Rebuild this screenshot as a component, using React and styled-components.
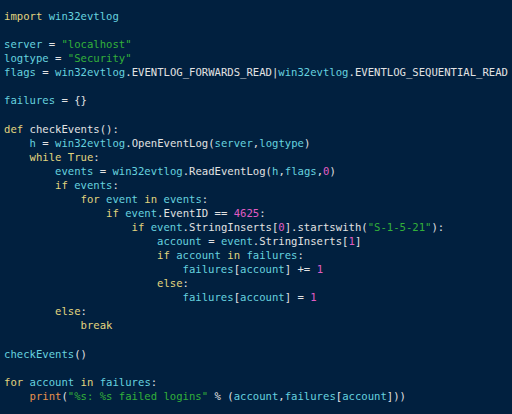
import React from 'react';
import styled, { createGlobalStyle } from 'styled-components';

const Global = createGlobalStyle`
  html, body {
    margin: 0;
    padding: 0;
    background: #01203f;
  }
`;

const palette = {
  id: '#66d2df',
  kw: '#e3d57e',
  str: '#33b03a',
  num: '#e05cc4',
  op: '#e2e2e2',
  fn: '#e8914c',
};

const Editor = styled.div`
  width: 512px;
  height: 414px;
  box-sizing: border-box;
  padding: 9px 0 0 4px;
  background: #01203f;
  font-family: "DejaVu Sans Mono", "Liberation Mono", monospace;
  font-size: 10.6px;
  line-height: 14.07px;
  overflow: hidden;
`;

const Line = styled.div`
  white-space: pre;
  height: 14.07px;
  color: ${palette.op};
`;

const Tok = styled.span`
  color: ${p => palette[p.$kind] || palette.op};
`;

const source = `import win32evtlog

server = "localhost"
logtype = "Security"
flags = win32evtlog.EVENTLOG_FORWARDS_READ|win32evtlog.EVENTLOG_SEQUENTIAL_READ

failures = {}

def checkEvents():
    h = win32evtlog.OpenEventLog(server,logtype)
    while True:
        events = win32evtlog.ReadEventLog(h,flags,0)
        if events:
            for event in events:
                if event.EventID == 4625:
                    if event.StringInserts[0].startswith("S-1-5-21"):
                        account = event.StringInserts[1]
                        if account in failures:
                            failures[account] += 1
                        else:
                            failures[account] = 1
        else:
            break

checkEvents()

for account in failures:
    print("%s: %s failed logins" % (account,failures[account]))`;

const keywords = ['import', 'def', 'while', 'True', 'if', 'for', 'in', 'else', 'break'];

// crude python highlighter, good enough for this snippet
const tokenize = line => {
  const out = [];
  const re = /(\s+)|("[^"]*")|(\d+)|([A-Za-z_][A-Za-z0-9_]*)|(.)/g;
  let m;
  let prev = '';
  while ((m = re.exec(line))) {
    const text = m[0];
    let kind = 'op';
    if (m[2]) kind = 'str';
    else if (m[3]) kind = 'num';
    else if (m[4]) {
      if (keywords.includes(text)) kind = 'kw';
      else if (text === 'print') kind = 'fn';
      else if (prev === '.' || prev === 'def') kind = 'op';
      else kind = 'id';
    }
    out.push({ text, kind });
    if (!m[1]) prev = text;
  }
  return out;
};

const App = () => (
  <>
    <Global />
    <Editor>
      {source.split('\n').map((line, i) => (
        <Line key={i}>
          {tokenize(line).map((t, j) => (
            <Tok key={j} $kind={t.kind}>{t.text}</Tok>
          ))}
        </Line>
      ))}
    </Editor>
  </>
);

export default App;
